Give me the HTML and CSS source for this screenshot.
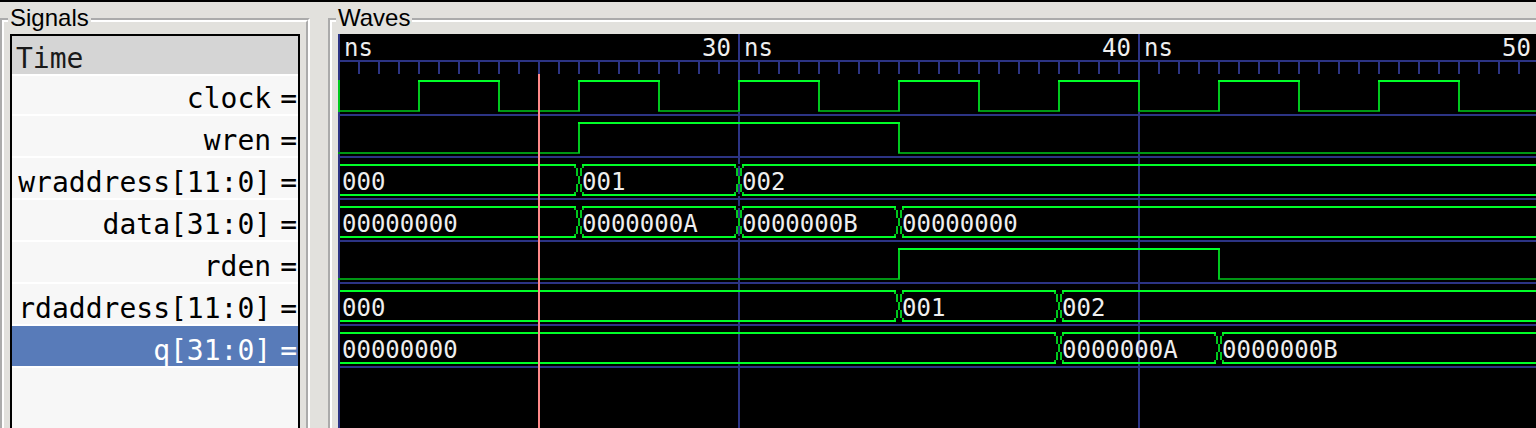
FILE: index.html
```html
<!DOCTYPE html>
<html lang="en">
<head>
<meta charset="utf-8">
<title>Waves</title>
<link rel="stylesheet" href="styles.css">
</head>
<body>
<main class="viewer">
  <fieldset class="panel signals">
    <legend>Signals</legend>
    <div class="signal-box">
      <div class="time-row">Time</div>
      <ul class="signal-list">
        <li class="signal first"><span>clock</span><span>=</span></li>
        <li class="signal"><span>wren</span><span>=</span></li>
        <li class="signal"><span>wraddress[11:0]</span><span>=</span></li>
        <li class="signal"><span>data[31:0]</span><span>=</span></li>
        <li class="signal"><span>rden</span><span>=</span></li>
        <li class="signal"><span>rdaddress[11:0]</span><span>=</span></li>
        <li class="signal selected"><span>q[31:0]</span><span>=</span></li>
      </ul>
    </div>
  </fieldset>
  <fieldset class="panel waves">
    <legend>Waves</legend>
    <svg class="canvas" role="img" aria-label="Signal waveforms">
      <defs>
        <pattern id="ticks" width="20" height="12" y="28" patternUnits="userSpaceOnUse">
          <rect class="grid-fill" width="2" height="12"/>
        </pattern>
        <g id="cross">
          <path class="blank" d="M-3 0H3M-3 30H3"/>
          <path class="edge" d="M-4 1V3M4 1V3M-2 3V11M2 3V11M0 11V19M-2 19V27M2 19V27M-4 27V29M4 27V29"/>
        </g>
      </defs>

      <!-- time ruler and grid -->
      <rect class="grid-fill" y="26" width="100%" height="2"/>
      <rect fill="url(#ticks)" y="28" width="100%" height="12"/>
      <path class="grid" d="M1 0V2000M401 0V2000M801 0V2000"/>
      <path class="grid" d="M0 81H4000M0 123H4000M0 165H4000M0 207H4000M0 249H4000M0 291H4000M0 333H4000"/>

      <!-- clock -->
      <path class="low" d="M0 77H82M160 77H242M320 77H402M480 77H562M640 77H722M800 77H882M960 77H1042M1120 77H4000"/>
      <path class="edge" d="M1 46V78M81 46V77M161 46V77M241 46V77M321 46V77M401 46V77M481 46V77M561 46V77M641 46V77M721 46V77M801 46V77M881 46V77M961 46V77M1041 46V77M1121 46V77"/>
      <path class="high" d="M80 47H162M240 47H322M400 47H482M560 47H642M720 47H802M880 47H962M1040 47H1122"/>

      <!-- wren -->
      <path class="low" d="M0 119H242M560 119H4000"/>
      <path class="edge" d="M241 88V119M561 88V119"/>
      <path class="high" d="M240 89H562"/>

      <!-- wraddress -->
      <path class="high" d="M2 131H4000M2 161H4000"/>
      <use href="#cross" x="241" y="131"/>
      <use href="#cross" x="401" y="131"/>
      <text x="4" y="156">000</text>
      <text x="244" y="156">001</text>
      <text x="404" y="156">002</text>

      <!-- data -->
      <path class="high" d="M2 173H4000M2 203H4000"/>
      <use href="#cross" x="241" y="173"/>
      <use href="#cross" x="401" y="173"/>
      <use href="#cross" x="561" y="173"/>
      <text x="4" y="198">00000000</text>
      <text x="244" y="198">0000000A</text>
      <text x="404" y="198">0000000B</text>
      <text x="564" y="198">00000000</text>

      <!-- rden -->
      <path class="low" d="M0 245H562M880 245H4000"/>
      <path class="edge" d="M561 214V245M881 214V245"/>
      <path class="high" d="M560 215H882"/>

      <!-- rdaddress -->
      <path class="high" d="M2 257H4000M2 287H4000"/>
      <use href="#cross" x="561" y="257"/>
      <use href="#cross" x="721" y="257"/>
      <text x="4" y="282">000</text>
      <text x="564" y="282">001</text>
      <text x="724" y="282">002</text>

      <!-- q -->
      <path class="high" d="M2 299H4000M2 329H4000"/>
      <use href="#cross" x="721" y="299"/>
      <use href="#cross" x="881" y="299"/>
      <text x="4" y="324">00000000</text>
      <text x="724" y="324">0000000A</text>
      <text x="884" y="324">0000000B</text>

      <!-- ruler labels -->
      <text x="6" y="22">ns</text>
      <text class="label-end" x="393" y="22">30</text>
      <text x="406" y="22">ns</text>
      <text class="label-end" x="793" y="22">40</text>
      <text x="806" y="22">ns</text>
      <text class="label-end" x="1193" y="22">50</text>

      <path class="cursor" d="M201 40V2000"/>
    </svg>
  </fieldset>
</main>
</body>
</html>
```
FILE: styles.css
```css
* {
  box-sizing: border-box;
}

body {
  margin: 0;
  background: #e2e1dd;
  color: #000;
  font-family: "Liberation Sans", Arial, sans-serif;
}

.viewer {
  display: flex;
  gap: 18px;
  height: 100vh;
  padding-top: 4px;
  border-top: 2px solid #000;
  overflow: hidden;
}

.panel {
  display: flex;
  flex-direction: column;
  margin: 0;
  padding: 0 6px;
  border: 4px groove #fff;
  border-bottom: 0;
  min-width: 0;
}

.panel legend {
  margin-left: -2px;
  padding: 0 2px 4px;
  font-size: 24px;
  line-height: 24px;
}

.signals {
  flex: none;
  min-width: 310px;
}

.waves {
  flex: 1;
  padding-right: 0;
  border-right: 0;
}

.signal-box {
  flex: 1;
  border: 2px solid #000;
  border-bottom: 0;
  background: #f7f7f7;
  font-family: "DejaVu Sans Mono", monospace;
  font-size: 28px;
  line-height: 30px;
}

.time-row,
.signal {
  display: flex;
  align-items: flex-end;
  border-bottom: 2px solid #fff;
  overflow: hidden;
}

.time-row {
  height: 40px;
  padding-left: 4px;
  background: #d5d5d5;
  color: #1a1a1a;
}

.signal-list {
  margin: 0;
  padding: 0;
  list-style: none;
}

.signal {
  justify-content: flex-end;
  gap: 9px;
  height: 42px;
  padding-right: 1px;
}

.signal.first {
  height: 40px;
}

.signal.selected {
  background: #587bb9;
  color: #fff;
}

.canvas {
  display: block;
  flex: 1;
  width: 100%;
  min-height: 0;
  background: #000;
  font-family: "DejaVu Sans Mono", monospace;
  font-size: 24px;
}

.canvas text {
  fill: #eee;
}

.canvas .label-end {
  text-anchor: end;
}

.canvas path {
  fill: none;
  stroke-width: 2px;
  shape-rendering: crispEdges;
}

.canvas .grid {
  stroke: #2c3484;
}

.grid-fill {
  fill: #2c3484;
}

.canvas .high {
  stroke: #00ff28;
}

.canvas .edge {
  stroke: #00c81e;
}

.canvas .low {
  stroke: #009614;
}

.canvas .blank {
  stroke: #000;
}

.canvas .cursor {
  stroke: #ff8a8a;
}
```
